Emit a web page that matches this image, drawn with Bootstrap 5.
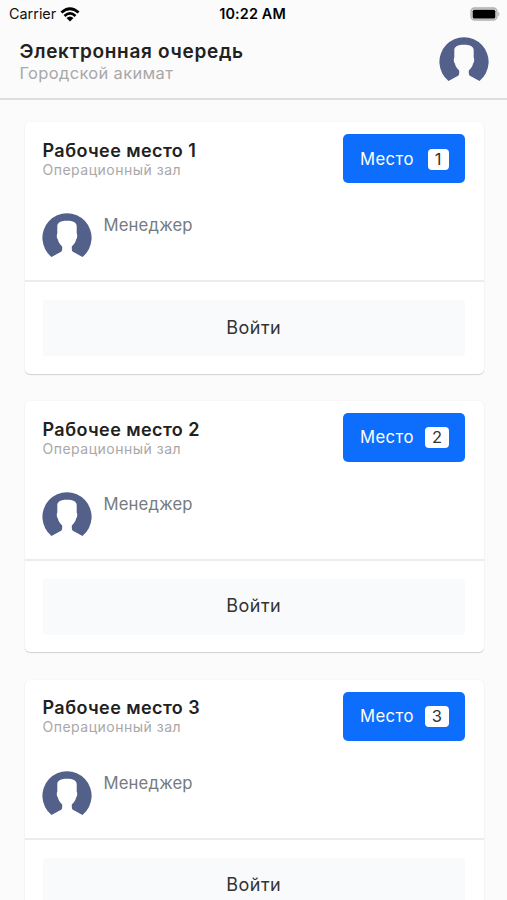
<!DOCTYPE html>
<html lang="ru">
<head>
<meta charset="utf-8">
<meta name="viewport" content="width=device-width, initial-scale=1">
<title>Электронная очередь</title>
<link href="https://cdn.jsdelivr.net/npm/bootstrap@5.3.0/dist/css/bootstrap.min.css" rel="stylesheet">
<style>
  body { font-family: Inter, "Liberation Sans", sans-serif; background: #fbfbfb; color: #212529; }
  .status-bar { height: 28px; padding: 0 7px 0 9px; font-size: 14.4px; line-height: 28px; color: #111; }
  .status-bar .clock { font-weight: 600; letter-spacing: .15px; color: #000; }
  .app-header { height: 72px; padding: 9px 18px 0 19.5px; border-bottom: 2px solid #dedede; }
  .app-title { font-size: 19px; line-height: 24px; font-weight: 600; letter-spacing: .7px; color: #212121; margin-top: 3px; }
  .app-sub { font-size: 16.5px; line-height: 20px; letter-spacing: .33px; color: #a8a8a8; margin-top: -1px; }
  .avatar { width: 50px; height: 45px; display: block; flex: none; }
  .queue { padding: 22.3px 23px 0 25px; }
  .place { height: 251.5px; margin-bottom: 27.2px; border: 0; border-radius: 5px; box-shadow: 0 1px 1px rgba(0,0,0,.16), 0 0 2px rgba(0,0,0,.05); }
  .place-main { height: 158px; padding: 12px 19px 0 17.5px; }
  .place-name { font-size: 18px; line-height: 22px; font-weight: 600; letter-spacing: .42px; color: #212121; margin-top: 5.7px; }
  .place-hall { font-size: 14px; line-height: 18px; letter-spacing: .5px; color: #a8a8a8; margin-top: -1px; }
  .btn-place { --bs-btn-bg: #0d6efd; width: 122px; height: 49px; border: 0; border-radius: 5px; font-size: 16.7px; letter-spacing: .4px; padding: 1px 16.5px 0 17px; }
  .num { min-width: 21px; height: 21px; padding: 0 6.5px; border-radius: 4px; background: #fff; color: #333; font-size: 16.5px; line-height: 21px; letter-spacing: 0; }
  .person { margin: 30px 0 0 -1px; gap: 12px; }
  .role { font-size: 16.7px; line-height: 24px; letter-spacing: .15px; color: #757b80; }
  .place-foot { height: 93.5px; border-top: 2px solid #ececec; padding: 18px 19px 0 17.5px; }
  .btn-enter { height: 56px; border: 0; border-radius: 3px; background: #f8fafb; color: #333; font-size: 18px; letter-spacing: .5px; padding-bottom: 8px; }
</style>
<script src="https://cdn.jsdelivr.net/npm/bootstrap@5.3.0/dist/js/bootstrap.bundle.min.js"></script>
</head>
<body>
<svg class="d-none">
  <symbol id="avatar" viewBox="0 0 50 45">
    <path fill="#53618a" d="M9.5 44A24.6 24.6 0 1 1 40.5 44L30.9 38.8Q29.8 38 29.8 36V33.5C32.2 31 33.8 29 34.1 26.5C35.4 25 35.5 22 34.7 20.5V13.5C34.7 9.5 31 7.8 25 7.8S15.3 9.5 15.3 13.5V20.5C14.5 22 14.6 25 15.9 26.5C16.2 29 17.8 31 20.2 33.5V36Q20.2 38 19.1 38.8Z"/>
  </symbol>
</svg>
<div class="vh-100 overflow-hidden">
<div class="status-bar row gx-0">
  <div class="col d-flex align-items-center">Carrier
    <svg class="ms-1" width="20" height="15" viewBox="0 0 20 15" fill="none" stroke="#000" stroke-width="2.7">
      <path d="M1.4 5.6Q10-2.1 18.6 5.6M4.5 8.9Q10 4 15.5 8.9"/>
      <path fill="#000" stroke="none" d="M6.5 10.9Q10 7.9 13.5 10.9L10 14.4Z"/>
    </svg>
  </div>
  <div class="col-auto clock me-1">10:22 AM</div>
  <div class="col d-flex align-items-center justify-content-end">
    <svg width="30" height="15" viewBox="0 0 30 15">
      <rect x="1" y="1" width="26" height="12" rx="3.5" fill="#ddd" stroke="#b0b0b0" stroke-width="1.3"/>
      <rect x="2.7" y="2.7" width="22.6" height="8.8" rx="1.5"/>
      <path d="M28.3 4.5Q30.6 7 28.3 9.5Z" fill="#aaa"/>
    </svg>
  </div>
</div>
<header class="app-header d-flex justify-content-between align-items-start">
  <div>
    <h1 class="app-title mb-0">Электронная очередь</h1>
    <div class="app-sub">Городской акимат</div>
  </div>
  <svg class="avatar"><use href="#avatar"/></svg>
</header>
<main class="queue">
  <section class="card place">
    <div class="place-main">
      <div class="d-flex justify-content-between align-items-start">
        <div><h2 class="place-name mb-0">Рабочее место 1</h2><div class="place-hall">Операционный зал</div></div>
        <button class="btn btn-primary btn-place d-flex align-items-center justify-content-between">Место <span class="num">1</span></button>
      </div>
      <div class="person d-flex"><svg class="avatar"><use href="#avatar"/></svg><div class="role">Менеджер</div></div>
    </div>
    <div class="place-foot"><button class="btn btn-enter w-100">Войти</button></div>
  </section>
  <section class="card place">
    <div class="place-main">
      <div class="d-flex justify-content-between align-items-start">
        <div><h2 class="place-name mb-0">Рабочее место 2</h2><div class="place-hall">Операционный зал</div></div>
        <button class="btn btn-primary btn-place d-flex align-items-center justify-content-between">Место <span class="num">2</span></button>
      </div>
      <div class="person d-flex"><svg class="avatar"><use href="#avatar"/></svg><div class="role">Менеджер</div></div>
    </div>
    <div class="place-foot"><button class="btn btn-enter w-100">Войти</button></div>
  </section>
  <section class="card place">
    <div class="place-main">
      <div class="d-flex justify-content-between align-items-start">
        <div><h2 class="place-name mb-0">Рабочее место 3</h2><div class="place-hall">Операционный зал</div></div>
        <button class="btn btn-primary btn-place d-flex align-items-center justify-content-between">Место <span class="num">3</span></button>
      </div>
      <div class="person d-flex"><svg class="avatar"><use href="#avatar"/></svg><div class="role">Менеджер</div></div>
    </div>
    <div class="place-foot"><button class="btn btn-enter w-100">Войти</button></div>
  </section>
</main>
</div>
</body>
</html>
